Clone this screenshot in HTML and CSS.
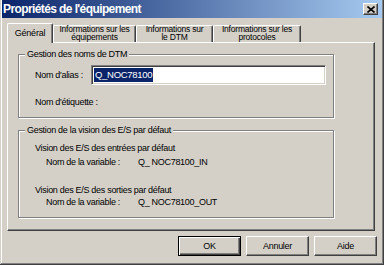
FILE: index.html
```html
<!DOCTYPE html>
<html>
<head>
  <title>Propriétés de l'équipement</title>
  <link rel="stylesheet" href="styles.css">
</head>
<body>
  <div class="window">
    <div class="titlebar">
      <span class="title">Propriétés de l'équipement</span>
      <button class="close">
        <svg width="8" height="7" viewBox="0 0 8 7">
          <path d="M0.5 0.5 L7.5 6.5 M7.5 0.5 L0.5 6.5" stroke="#000" stroke-width="1.6" fill="none"/>
        </svg>
      </button>
    </div>

    <div class="tabs">
      <div class="tab active">Général</div>
      <div class="tab tab-equip"><span class="tab-text">Informations sur les<br>équipements</span></div>
      <div class="tab tab-dtm"><span class="tab-text">Informations sur<br>le DTM</span></div>
      <div class="tab tab-proto"><span class="tab-text">Informations sur les<br>protocoles</span></div>
    </div>

    <div class="panel">
      <div class="group group-names">
        <span class="legend">Gestion des noms de DTM</span>
        <div class="row">
          <label class="label">Nom d'alias :</label>
          <div class="field"><span class="sel">Q_NOC78100</span></div>
        </div>
        <div class="tag">Nom d'étiquette :</div>
      </div>

      <div class="group group-io">
        <span class="legend">Gestion de la vision des E/S par défaut</span>
        <div class="io-title">Vision des E/S des entrées par défaut</div>
        <div class="io-var"><span class="var-label">Nom de la variable :</span><span>Q_ NOC78100_IN</span></div>
        <div class="io-title second">Vision des E/S des sorties par défaut</div>
        <div class="io-var last"><span class="var-label">Nom de la variable :</span><span>Q_ NOC78100_OUT</span></div>
      </div>
    </div>

    <div class="buttons">
      <button class="btn default">OK</button>
      <button class="btn">Annuler</button>
      <button class="btn">Aide</button>
    </div>
  </div>
</body>
</html>
```
FILE: styles.css
```css
* {
  box-sizing: border-box;
}

body {
  margin: 0;
  padding: 0;
  background-color: #d4d0c8;
  font-family: "Liberation Sans", Arial, sans-serif;
  font-size: 9px;
  letter-spacing: -0.3px;
  color: #000;
}

.window {
  width: 384px;
  height: 265px;
  padding: 0 2px 2px 2px;
  background-color: #d4d0c8;
  box-shadow: inset -1px -1px #404040, inset 1px 0 #d4d0c8, inset -2px -2px #808080, inset 2px 0 #fff;
}

.titlebar {
  height: 18px;
  display: flex;
  align-items: center;
  justify-content: space-between;
  padding: 0 4px 0 1px;
  background: linear-gradient(to right, #0a246a, #a6caf0);
  color: #fff;
  font-weight: bold;
  font-size: 12px;
  letter-spacing: -0.6px;
}

.close {
  width: 15px;
  height: 12px;
  padding: 0;
  display: flex;
  align-items: center;
  justify-content: center;
  background-color: #d4d0c8;
  border: 1px solid;
  border-color: #fff #404040 #404040 #fff;
  box-shadow: inset -1px -1px #808080;
}

/* tabs */
.tabs {
  position: relative;
  z-index: 1;
  display: flex;
  align-items: flex-end;
  height: 19px;
  margin-top: 5px;
  padding-left: 5px;
}

.tab {
  height: 17px;
  border: 1px solid;
  border-bottom: none;
  border-color: #fff #404040 #404040 #fff;
  border-radius: 2px 2px 0 0;
  box-shadow: inset -1px 0 #808080;
  background-color: #d4d0c8;
  text-align: center;
  font-size: 8.5px;
  letter-spacing: -0.2px;
  line-height: 8px;
}

.tab-text {
  display: block;
  margin-top: -1px;
}

.tab.active {
  width: 46px;
  height: 20px;
  margin-bottom: -1px;
  line-height: 18px;
  font-size: 9px;
}

.tab-equip {
  width: 83px;
}

.tab-dtm {
  width: 77px;
}

.tab-proto {
  width: 88px;
}

/* panel */
.panel {
  width: 368px;
  height: 189px;
  margin-left: 5px;
  padding: 11px 0 0 10px;
  border: 1px solid;
  border-color: #fff #404040 #404040 #fff;
  box-shadow: inset -1px -1px #808080;
}

.group {
  position: relative;
  width: 316px;
  border: 1px solid #808080;
  box-shadow: 1px 1px 0 #fff, inset 1px 1px 0 #fff;
}

.legend {
  position: absolute;
  top: -7px;
  left: 6px;
  padding: 0 2px;
  line-height: 12px;
  background-color: #d4d0c8;
}

.group-names {
  height: 64px;
  padding: 10px 7px 0 16px;
}

.row {
  display: flex;
  align-items: center;
  height: 20px;
}

.label {
  width: 56px;
}

.field {
  width: 235px;
  height: 20px;
  padding: 1px 0 0 1px;
  background-color: #fff;
  border: 1px solid;
  border-color: #808080 #fff #fff #808080;
  box-shadow: inset 1px 1px #404040, inset -1px -1px #d4d0c8;
}

.sel {
  display: inline-block;
  margin: 1px 0 0 1px;
  padding: 0 1px;
  line-height: 14px;
  font-size: 9.5px;
  background-color: #0a246a;
  color: #fff;
}

.tag {
  margin-top: 11px;
  line-height: 12px;
}

.group-io {
  height: 88px;
  margin-top: 12px;
  padding: 11px 0 0 16px;
}

.io-title {
  line-height: 12px;
}

.io-title.second {
  margin-top: 16px;
}

.io-var {
  display: flex;
  margin-top: 2px;
  padding-left: 11px;
  line-height: 12px;
}

.io-var.last {
  margin-top: 0;
}

.var-label {
  width: 92px;
}

/* buttons */
.buttons {
  display: flex;
  justify-content: flex-end;
  gap: 5px;
  margin-top: 5px;
  padding-right: 5px;
}

.btn {
  width: 63px;
  height: 20px;
  padding: 0;
  font-family: inherit;
  font-size: 9px;
  letter-spacing: -0.3px;
  color: #000;
  background-color: #d4d0c8;
  border: 1px solid;
  border-color: #fff #404040 #404040 #fff;
  box-shadow: inset -1px -1px #808080;
}

.btn.default {
  border-color: #000;
  box-shadow: inset 1px 1px #fff, inset -1px -1px #404040, inset -2px -2px #808080;
}
```
